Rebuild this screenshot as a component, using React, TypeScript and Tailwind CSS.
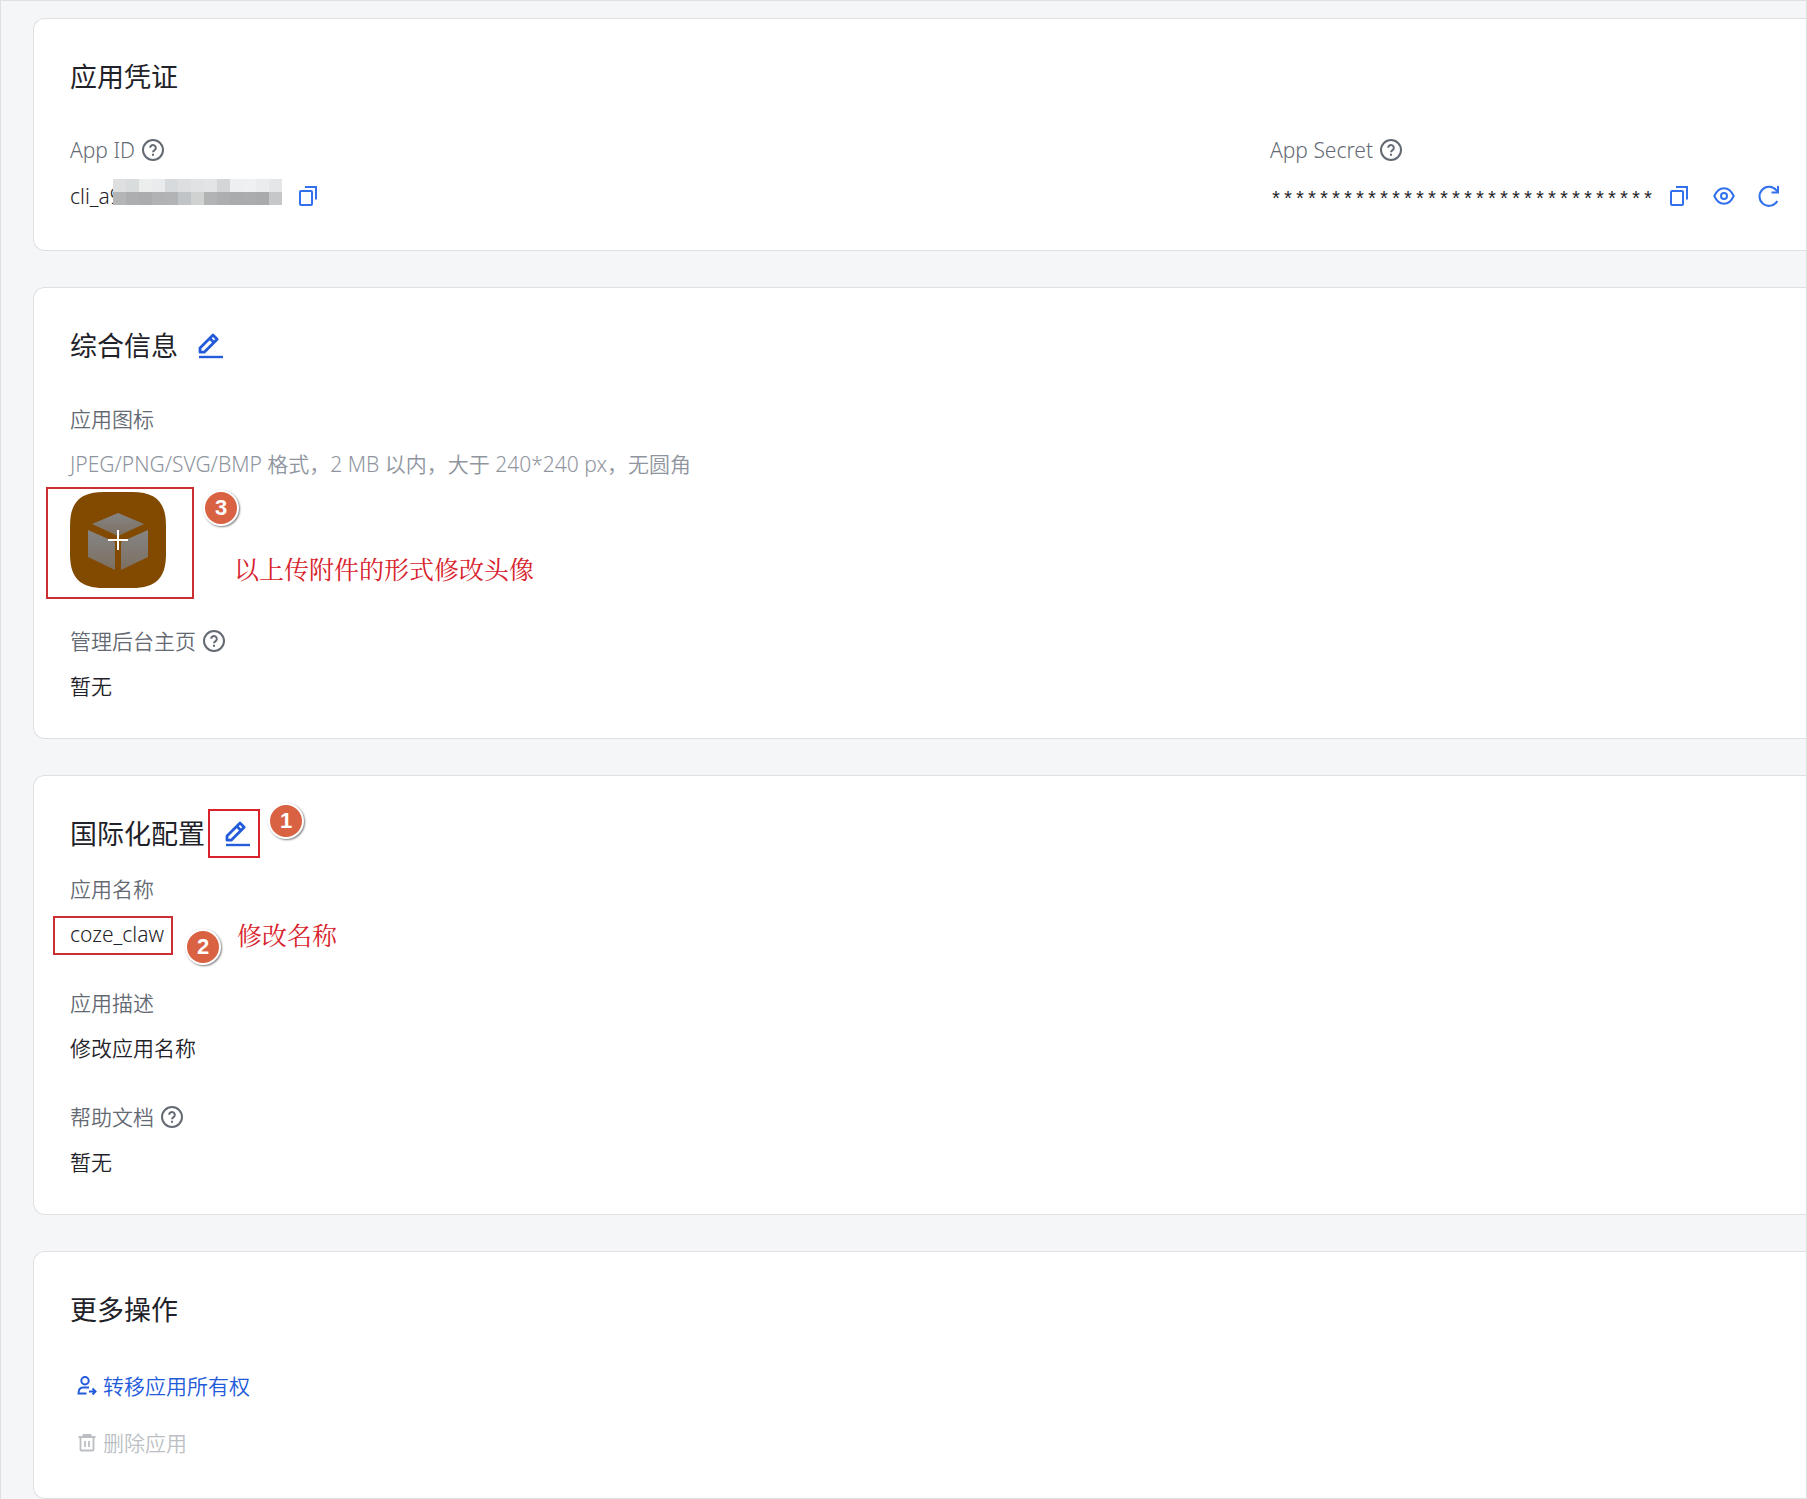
import React from "react";

type IconProps = { className?: string };

const HelpIcon = () => (
  <svg viewBox="0 0 24 24" className="size-6 shrink-0" fill="none" stroke="currentColor" strokeWidth="2" aria-hidden="true">
    <circle cx="12" cy="12" r="10" />
    <path d="M9.2 9.8a2.8 2.8 0 1 1 4.4 2.3c-1 .7-1.6 1.1-1.6 2.2" />
    <path d="M12 15.8v2" />
  </svg>
);

const CopyIcon = ({ className = "size-6" }: IconProps) => (
  <svg viewBox="0 0 24 24" className={className} fill="none" stroke="currentColor" strokeWidth="2" aria-hidden="true">
    <rect x="4" y="7" width="12" height="14" rx="1" />
    <path d="M9 3h11v12.5" />
  </svg>
);

const EyeIcon = () => (
  <svg viewBox="0 0 24 24" className="size-6" fill="none" stroke="currentColor" strokeWidth="2" aria-hidden="true">
    <path d="M2.300 12C4.600 6.900 8 4.200 12 4.200s7.400 2.700 9.700 7.800c-2.300 5.100-5.700 7.800-9.700 7.800s-7.400-2.700-9.700-7.800z" strokeLinejoin="round" />
    <circle cx="12" cy="12" r="3" />
  </svg>
);

const RefreshIcon = () => (
  <svg viewBox="0 0 24 24" className="size-6" fill="none" stroke="currentColor" strokeWidth="2" aria-hidden="true">
    <path d="M20.300 17A9.500 9.500 0 1 1 19.500 6.500L21 8" />
    <path d="M21 2v6.500h-6.500" />
  </svg>
);

const EditIcon = () => (
  <svg viewBox="0 0 28 28" className="size-7" fill="none" stroke="currentColor" strokeWidth="2.800" aria-hidden="true">
    <path d="M4 16 17 3l4.200 4.200L8.200 20.200H4z" strokeLinejoin="round" />
    <path d="m13.800 6.200 4.200 4.200" />
    <path d="M3 25h24" strokeWidth="2.400" />
  </svg>
);

const TransferIcon = () => (
  <svg viewBox="0 0 20 20" className="size-5" fill="none" stroke="currentColor" strokeWidth="2" aria-hidden="true">
    <circle cx="8" cy="4.800" r="3.700" />
    <path d="M12 11.500H6c-3 0-4.500 2-4.500 6h8" />
    <path d="M12 15.500h6M15.500 12.500l3 3-3 3" />
  </svg>
);

const TrashIcon = () => (
  <svg viewBox="0 0 20 20" className="size-5" fill="none" stroke="currentColor" strokeWidth="1.800" aria-hidden="true">
    <path d="M1.500 4h17M6.500 3.500V2h7v1.500M3.500 4v12.500q0 1 1 1h11q1 0 1-1V4M8 8v6M12 8v6" />
  </svg>
);

const Card = ({ children, className = "" }: { children: React.ReactNode; className?: string }) => (
  <section className={`rounded-l-xl border border-r-0 border-[#dee0e3] bg-white pl-9 ${className}`}>{children}</section>
);

const Title = ({ children }: { children: React.ReactNode }) => (
  <h2 className="text-[27px] font-normal leading-9 text-[#1f2329]">{children}</h2>
);

const Label = ({ children, help = false }: { children: React.ReactNode; help?: boolean }) => (
  <div className="flex h-8 items-center gap-[6px] leading-8 text-[#646a73]">
    <span>{children}</span>
    {help && (
      <button type="button" aria-label="帮助">
        <HelpIcon />
      </button>
    )}
  </div>
);

const Badge = ({ children, className }: { children: React.ReactNode; className: string }) => (
  <span
    className={`absolute flex size-9 items-center justify-center rounded-full border-2 border-white bg-[#d96243] font-['Liberation_Sans',sans-serif] text-[22px] font-bold leading-none text-white shadow-[1px_1px_2px_rgba(0,0,0,0.5)] ${className}`}
  >
    {children}
  </span>
);

const Note = ({ children, className }: { children: React.ReactNode; className: string }) => (
  <span
    className={`absolute whitespace-nowrap font-['Noto_Serif_CJK_SC','Noto_Sans_CJK_SC',serif] text-[25px] font-normal leading-8 text-[#d8222c] ${className}`}
  >
    {children}
  </span>
);

const mosaic = [
  ["bg-[#dedfe0]", "bg-[#b4b5b7]"],
  ["bg-[#d9dcdc]", "bg-[#adaeb0]"],
  ["bg-[#eceeee]", "bg-[#aaacae]"],
  ["bg-[#e9ebec]", "bg-[#b0b2b4]"],
  ["bg-[#d7dadc]", "bg-[#b1b3b5]"],
  ["bg-[#dcdee0]", "bg-[#c1c4c6]"],
  ["bg-[#e0e2e4]", "bg-[#d0d2d2]"],
  ["bg-[#e2e4e5]", "bg-[#b2b3b5]"],
  ["bg-[#d4d5d6]", "bg-[#acaeb0]"],
  ["bg-[#eeeff1]", "bg-[#a9abad]"],
  ["bg-[#eff0f2]", "bg-[#abacae]"],
  ["bg-[#ebecee]", "bg-[#a8aaac]"],
  ["bg-[#e5e6e8]", "bg-[#c6c7c9]"],
];

export default function App() {
  return (
    <main className="min-h-screen overflow-hidden border border-[#dee0e3] bg-[#f5f6f7] pl-8 pt-[17px] font-['Noto_Sans','Noto_Sans_CJK_SC',sans-serif] text-[21px] font-[350] text-[#1f2329]">
      <div className="flex flex-col gap-9">
        <Card className="pb-[38px] pt-10">
          <Title>应用凭证</Title>
          <div className="mt-[39px] grid grid-cols-[1200px_1fr]">
            <div>
              <Label help>App ID</Label>
              <div className="mt-[14px] flex h-8 items-center leading-8">
                <span>cli_a9</span>
                <span aria-hidden="true" className="-ml-[9px] -mt-2 grid h-[26px] w-[169px] grid-cols-13">
                  {mosaic.map(([top, bottom], i) => (
                    <span key={i} className="flex flex-col">
                      <i className={`flex-1 ${top}`} />
                      <i className={`flex-1 ${bottom}`} />
                    </span>
                  ))}
                </span>
                <button type="button" aria-label="复制" className="ml-[14px] text-[#3370eb]">
                  <CopyIcon />
                </button>
              </div>
            </div>
            <div>
              <Label help>App Secret</Label>
              <div className="mt-[14px] flex h-8 items-center leading-8">
                <span className="pt-[10px] font-['Liberation_Mono',monospace] text-xl font-normal leading-none">********************************</span>
                <span className="ml-[13px] flex gap-[21px] text-[#3370eb]">
                  <button type="button" aria-label="复制"><CopyIcon /></button>
                  <button type="button" aria-label="显示"><EyeIcon /></button>
                  <button type="button" aria-label="刷新"><RefreshIcon /></button>
                </span>
              </div>
            </div>
          </div>
        </Card>

        <Card className="pb-9 pt-10">
          <div className="flex items-center gap-[18px]">
            <Title>综合信息</Title>
            <button type="button" aria-label="编辑" className="text-[#245bdb]"><EditIcon /></button>
          </div>
          <div className="mt-[39px]">
            <Label>应用图标</Label>
            <p className="mt-[13px] leading-8 text-[#8f959e]">JPEG/PNG/SVG/BMP 格式，2 MB 以内，大于 240*240 px，无圆角</p>
          </div>
          <div className="relative mt-3 w-24">
            <button type="button" aria-label="上传图标" className="block">
              <svg viewBox="0 0 96 96" className="size-24" aria-hidden="true">
                <defs>
                  <linearGradient id="cube" x1="0" y1="0" x2="0" y2="1">
                    <stop offset="0" stopColor="#858585" />
                    <stop offset="1" stopColor="#7d6f60" />
                  </linearGradient>
                </defs>
                <path d="M34 0h28C86 0 96 10 96 34v28c0 24-10 34-34 34H34C10 96 0 86 0 62V34C0 10 10 0 34 0z" fill="#824a00" />
                <g fill="url(#cube)">
                  <path d="M48 21 74 32 48 44 22 32z" />
                  <path d="M18 38 45 50V78L18 65z" />
                  <path d="M78 38 51 50V78L78 65z" />
                </g>
                <path d="M48 38v20M38 48h20" stroke="#fff" strokeWidth="2" />
              </svg>
            </button>
            <span className="absolute -left-6 -top-[5px] h-28 w-[148px] border-2 border-[#cc2f33]" />
            <Badge className="-top-[2px] left-[133px]">3</Badge>
            <Note className="left-[164px] top-[60px]">以上传附件的形式修改头像</Note>
          </div>
          <div className="mt-[37px]">
            <Label help>管理后台主页</Label>
            <p className="mt-[13px] leading-8">暂无</p>
          </div>
        </Card>

        <Card className="pb-9 pt-10">
          <div className="relative flex w-fit items-center gap-[18px]">
            <Title>国际化配置</Title>
            <button type="button" aria-label="编辑" className="text-[#245bdb]"><EditIcon /></button>
            <span className="absolute -right-[9px] -top-[7px] h-[49px] w-[52px] border-2 border-[#d8222c]" />
            <Badge className="-right-[53px] -top-[13px]">1</Badge>
          </div>
          <div className="mt-[21px]">
            <Label>应用名称</Label>
            <div className="relative mt-[13px] w-fit">
              <p className="leading-8">coze_claw</p>
              <span className="absolute -left-[17px] -top-[2px] h-[39px] w-[120px] border-2 border-[#cc2f33]" />
              <Badge className="left-[115px] top-[11px]">2</Badge>
              <Note className="left-[167px] top-0">修改名称</Note>
            </div>
          </div>
          <div className="mt-[37px]">
            <Label>应用描述</Label>
            <p className="mt-[13px] leading-8">修改应用名称</p>
          </div>
          <div className="mt-[37px]">
            <Label help>帮助文档</Label>
            <p className="mt-[13px] leading-8">暂无</p>
          </div>
        </Card>

        <Card className="pb-[39px] pt-10">
          <Title>更多操作</Title>
          <div className="mt-[42px] flex flex-col items-start gap-[25px] pl-[7px]">
            <button type="button" className="flex items-center gap-[6px] leading-8 text-[#245bdb]">
              <TransferIcon />
              转移应用所有权
            </button>
            <button type="button" disabled className="flex items-center gap-[6px] leading-8 text-[#bbbfc4]">
              <TrashIcon />
              删除应用
            </button>
          </div>
        </Card>
      </div>
    </main>
  );
}
